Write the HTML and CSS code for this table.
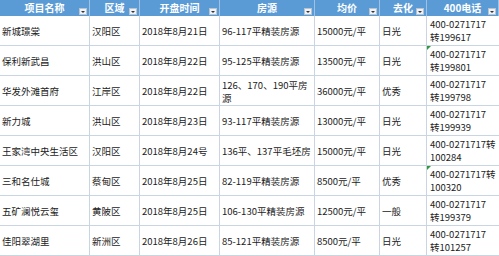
FILE: index.html
```html
<!DOCTYPE html>
<html lang="zh">
<head>
<meta charset="utf-8">
<link rel="stylesheet" href="styles.css">
</head>
<body>
<div class="sheet">
  <div class="hd">项目名称<span class="dd"></span></div>
  <div class="hd">区域<span class="dd"></span></div>
  <div class="hd">开盘时间<span class="dd"></span></div>
  <div class="hd">房源<span class="dd"></span></div>
  <div class="hd">均价<span class="dd"></span></div>
  <div class="hd">去化<span class="dd"></span></div>
  <div class="hd">400电话<span class="dd"></span></div>

  <div class="c">新城璟棠</div><div class="c">汉阳区</div><div class="c">2018年8月21日</div><div class="c">96-117平精装房源</div><div class="c">15000元/平</div><div class="c">日光</div><div class="c ph">400-0271717<br>转199617</div>

  <div class="c">保利新武昌</div><div class="c">洪山区</div><div class="c">2018年8月22日</div><div class="c">95-125平精装房源</div><div class="c">13500元/平</div><div class="c">日光</div><div class="c ph mark">400-0271717<br>转199801</div>

  <div class="c">华发外滩首府</div><div class="c">江岸区</div><div class="c">2018年8月22日</div><div class="c two">126、170、190平房<br>源</div><div class="c">36000元/平</div><div class="c">优秀</div><div class="c ph">400-0271717<br>转199798</div>

  <div class="c">新力城</div><div class="c">洪山区</div><div class="c">2018年8月23日</div><div class="c">93-117平精装房源</div><div class="c">13000元/平</div><div class="c">日光</div><div class="c ph">400-0271717<br>转199939</div>

  <div class="c">王家湾中央生活区</div><div class="c">汉阳区</div><div class="c">2018年8月24号</div><div class="c">136平、137平毛坯房</div><div class="c">15000元/平</div><div class="c">日光</div><div class="c ph">400-0271717转<br>100284</div>

  <div class="c">三和名仕城</div><div class="c">蔡甸区</div><div class="c">2018年8月25日</div><div class="c">82-119平精装房源</div><div class="c">8500元/平</div><div class="c">优秀</div><div class="c ph mark">400-0271717转<br>100320</div>

  <div class="c">五矿澜悦云玺</div><div class="c">黄陂区</div><div class="c">2018年8月25日</div><div class="c">106-130平精装房源</div><div class="c">12500元/平</div><div class="c">一般</div><div class="c ph">400-0271717<br>转199379</div>

  <div class="c">佳阳翠湖里</div><div class="c">新洲区</div><div class="c">2018年8月26日</div><div class="c">85-121平精装房源</div><div class="c">8500元/平</div><div class="c">日光</div><div class="c ph">400-0271717<br>转101257</div>
</div>
</body>
</html>
```
FILE: styles.css
```css
html, body {
  margin: 0;
  padding: 0;
  background: #ffffff;
}
.sheet {
  display: grid;
  grid-template-columns: 90px 50px 80px 95px 65px 47px 72px;
  grid-auto-rows: 30px;
  grid-template-rows: 16px;
  font-family: "Noto Sans CJK SC", sans-serif;
  font-size: 9.5px;
  color: #222;
}
.hd {
  position: relative;
  background: #5b9bd5;
  color: #ffffff;
  font-weight: bold;
  font-size: 10px;
  line-height: 16px;
  text-align: center;
  border-right: 1px solid #9cc2e5;
  box-sizing: border-box;
}
.hd:last-of-type {
  border-right: none;
}
.dd {
  position: absolute;
  right: 2px;
  top: 8px;
  width: 8px;
  height: 7px;
  background: #eef2f6;
  border: 1px solid #b8c4d0;
  box-sizing: border-box;
}
.dd::after {
  content: "";
  position: absolute;
  left: 1px;
  top: 2px;
  border-left: 2px solid transparent;
  border-right: 2px solid transparent;
  border-top: 2px solid #333;
}
.c {
  position: relative;
  display: flex;
  align-items: center;
  padding: 0 0 0 2px;
  border-right: 1px solid #c9d5e2;
  border-bottom: 1px solid #c9d5e2;
  box-sizing: border-box;
  white-space: nowrap;
  line-height: 14px;
}
.c:nth-child(7n) {
  border-right: none;
}
.two {
  line-height: 13px;
  padding-top: 2px;
}
.ph {
  padding-left: 3px;
  line-height: 13.5px;
  padding-top: 1px;
}
.mark::before {
  content: "";
  position: absolute;
  left: 0;
  top: 0;
  border-top: 4px solid #2e9a3a;
  border-right: 4px solid transparent;
}
```
